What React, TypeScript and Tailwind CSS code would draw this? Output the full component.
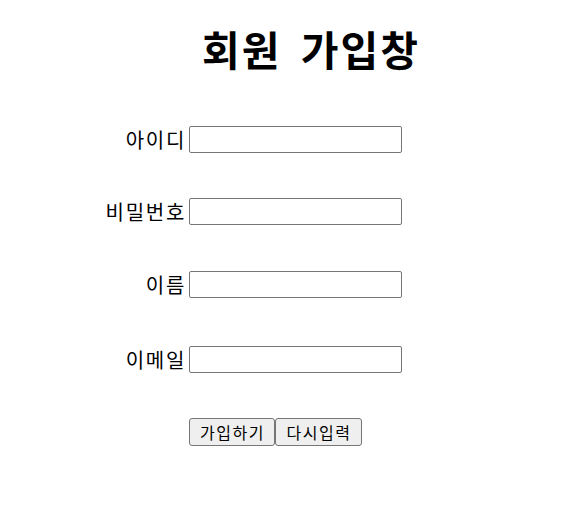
export default function App() {
  const fields = [
    { label: '아이디', mt: 'mt-0' },
    { label: '비밀번호', mt: 'mt-[45px]' },
    { label: '이름', mt: 'mt-[46px]' },
    { label: '이메일', mt: 'mt-[48px]' },
  ];

  return (
    <div className="w-[586px] h-[511px] bg-white text-black font-['Noto_Sans_CJK_KR','Noto_Sans',sans-serif]">
      {/* Title */}
      <h1 className="pl-[36px] pt-[23px] text-center text-[41px] leading-[50px] font-bold tracking-[2px] [word-spacing:8px]">
        회원 가입창
      </h1>

      {/* Form */}
      <form className="mt-[53px] ml-[84px] flex flex-col">
        {fields.map((f) => (
          <div key={f.label} className={`flex items-center gap-[3px] ${f.mt}`}>
            <label className="w-[102px] text-right text-[20px] leading-[27px] tracking-[1.7px]">{f.label}</label>
            <input
              type="text"
              className="w-[213px] h-[27px] border border-[#767676] rounded-[2px] bg-white px-1 text-[14px]"
            />
          </div>
        ))}

        <div className="mt-[45px] ml-[105px] flex">
          <button
            type="submit"
            className="w-[86px] h-[28px] border border-[#767676] rounded-[3px] bg-[#efefef] text-[16px] leading-none tracking-[1.5px] pl-[1px]"
          >
            가입하기
          </button>
          <button
            type="reset"
            className="w-[87px] h-[28px] border border-[#767676] rounded-[3px] bg-[#efefef] text-[16px] leading-none tracking-[1.5px] pl-[1px]"
          >
            다시입력
          </button>
        </div>
      </form>
    </div>
  );
}
